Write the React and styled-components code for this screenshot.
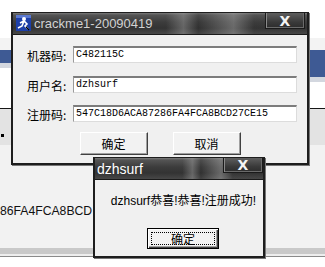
import React from "react";
import styled, { createGlobalStyle } from "styled-components";

const Global = createGlobalStyle`
  html, body {
    margin: 0;
    padding: 0;
    background: #ffffff;
  }
  body {
    width: 325px;
    height: 267px;
    overflow: hidden;
  }
`;

const CJK = `"Liberation Sans", "Noto Sans CJK SC", sans-serif`;

const Desktop = styled.div`
  position: relative;
  width: 325px;
  height: 267px;
  overflow: hidden;
  background: #ffffff;
`;

/* ---------- the desktop behind the windows ---------- */

const Backdrop = styled.div`
  display: flex;
  flex-direction: column;
  height: 100%;
`;

const TopSpace = styled.div`
  height: 50px;
  background: linear-gradient(180deg, #ffffff 0 38px, #f3f3f3 38px);
`;

const BandArea = styled.div`
  display: flex;
  align-items: flex-start;
  justify-content: space-between;
  height: 58px;
  background: #ffffff;
`;

const BlueBar = styled.div`
  width: ${(p) => p.$w}px;
  height: ${(p) => p.$h}px;
  background: #3e5a94;
  border-bottom: 5px solid #d3d7df;
`;

const Rule = styled.div`
  height: 1px;
  background: #161616;
`;

const GrayBand = styled.div`
  display: flex;
  align-items: flex-end;
  height: 36px;
  padding-bottom: 8px;
  box-sizing: border-box;
  background: #e3e3e3;
`;

const Marker = styled.span`
  width: 3px;
  height: 3px;
  margin-left: 1px;
  background: #000;
`;

const Panel = styled.div`
  display: flex;
  align-items: center;
  height: 103px;
  padding-top: 29px;
  box-sizing: border-box;
  background: #f2f2f2;
`;

const PanelText = styled.span`
  font-family: "Liberation Sans", sans-serif;
  font-size: 12.2px;
  color: #111;
  white-space: nowrap;
`;

const Shelf = styled.div`
  height: 6px;
  background: #c9c9c9;
  border-bottom: 2px solid #eeeeee;
`;

const ShelfLine = styled.div`
  height: 1px;
  background: #8a8a8a;
`;

/* ---------- windows ---------- */

const Window = styled.div`
  position: absolute;
  left: ${(p) => p.$x}px;
  top: ${(p) => p.$y}px;
  width: ${(p) => p.$w}px;
  height: ${(p) => p.$h}px;
  box-sizing: border-box;
  display: flex;
  flex-direction: column;
  background: #f0f0f0;
  border: 2px solid #1e1e1e;
  border-top-width: 1px;
  box-shadow: 1px 1px 0 #777;
`;

const TitleBar = styled.div`
  display: flex;
  align-items: flex-start;
  height: 22px;
  flex: none;
  padding-left: 2px;
  box-sizing: border-box;
  background:
    linear-gradient(90deg, rgba(0,0,0,0) 0%, rgba(0,0,0,0) 52%, rgba(160,160,160,0.45) 58%, rgba(40,40,40,0.2) 63%, rgba(170,170,170,0.45) 75%, rgba(60,60,60,0.1) 82%, rgba(0,0,0,0) 100%),
    linear-gradient(180deg, #7a7a7a 0px, #545454 2px, #3c3c3c 9px, #333333 15px, #4b4b4b 22px);
  border-bottom: 1px solid #1a1a1a;
`;

const TitleIcon = styled.svg`
  flex: none;
  margin: 2px 3px 0 1px;
`;

const TitleText = styled.span`
  flex: 1;
  margin-top: 3px;
  font-family: "Liberation Sans", sans-serif;
  font-size: ${(p) => p.$size || 13}px;
  color: ${(p) => p.$color || "#d2d2d2"};
  line-height: 16px;
  white-space: nowrap;
`;

const CloseButton = styled.div`
  flex: none;
  width: 40px;
  height: ${(p) => p.$h}px;
  margin-right: ${(p) => p.$mr}px;
  box-sizing: border-box;
  display: flex;
  align-items: center;
  justify-content: center;
  background: linear-gradient(180deg, #5e5e5e, #3a3a3a 60%, #2c2c2c);
  border: 1px solid #1a1a1a;
  border-top: none;
  box-shadow: inset 1px 0 0 #8a8a8a, inset -1px -1px 0 #6a6a6a;
  font-family: "DejaVu Sans", sans-serif;
  font-weight: bold;
  font-size: 14px;
  color: #f4f4f4;
  line-height: 1;
`;

const Client = styled.div`
  flex: 1;
  display: flex;
  flex-direction: column;
  padding: 11px 10px 0 14px;
`;

const FieldGrid = styled.div`
  display: grid;
  grid-template-columns: 46px 1fr;
  row-gap: 11.5px;
`;

const Label = styled.span`
  font-family: "Noto Sans CJK SC", sans-serif;
  font-size: 12px;
  line-height: 17px;
  color: #000;
  margin-top: 1px;
  white-space: nowrap;
`;

const Field = styled.div`
  height: 17px;
  box-sizing: border-box;
  background: #ffffff;
  border: 1px solid #dcdcdc;
  border-top: 2px solid #7c7c7c;
  border-left: 1px solid #9a9a9a;
  padding-left: 2px;
  font-family: "Liberation Mono", monospace;
  font-size: 10px;
  line-height: 14px;
  color: #000;
  white-space: nowrap;
  overflow: hidden;
`;

const ButtonRow = styled.div`
  display: flex;
  justify-content: center;
  gap: 25px;
  margin-top: 9px;
  padding-right: 4px;
`;

const PushButton = styled.div`
  flex: none;
  width: ${(p) => p.$w}px;
  height: ${(p) => p.$h}px;
  box-sizing: border-box;
  display: flex;
  align-items: center;
  justify-content: center;
  background: #f2f2f2;
  border: 1px solid ${(p) => (p.$default ? "#000" : "#fff")};
  border-right-color: ${(p) => (p.$default ? "#000" : "#404040")};
  border-bottom-color: ${(p) => (p.$default ? "#000" : "#404040")};
  box-shadow: ${(p) =>
    p.$default
      ? "inset 1px 1px 0 #fff, inset -1px -1px 0 #404040, inset -2px -2px 0 #a0a0a0"
      : "inset -1px -1px 0 #a0a0a0"};
  font-family: "Noto Sans CJK SC", sans-serif;
  font-size: 12px;
  color: #000;
`;

const FocusRing = styled.span`
  display: flex;
  align-items: center;
  justify-content: center;
  width: calc(100% - 6px);
  height: calc(100% - 6px);
  border: 1px dotted #000;
  box-sizing: border-box;
`;

const MessageBody = styled.div`
  flex: 1;
  display: flex;
  flex-direction: column;
  align-items: center;
  padding-top: 13px;
`;

const Message = styled.span`
  font-family: ${CJK};
  font-size: 12px;
  line-height: 16px;
  color: #000;
  margin-left: 9px;
  white-space: nowrap;
`;

const MessageActions = styled.div`
  display: flex;
  margin-top: 19px;
  margin-left: 8px;
`;

function AppIcon() {
  return (
    <TitleIcon width="15" height="16" viewBox="0 0 15 16">
      <rect x="0" y="0" width="15" height="16" fill="#1d3fa8" />
      <rect x="0" y="0" width="15" height="3" fill="#5a78d0" />
      <circle cx="8" cy="4" r="2" fill="#ffffff" />
      <path d="M4 8 L8 6 L11 9 L9 11 L12 14 M8 6 L6 11 L2 13" stroke="#ffffff" strokeWidth="1.6" fill="none" />
      <path d="M10 12 L13 15" stroke="#000" strokeWidth="1.2" />
    </TitleIcon>
  );
}

export default function App() {
  return (
    <>
      <Global />
      <Desktop>
        <Backdrop>
          <TopSpace />
          <BandArea>
            <BlueBar $w={11} $h={13} />
            <BlueBar $w={17} $h={27} />
          </BandArea>
          <Rule />
          <GrayBand>
            <Marker />
          </GrayBand>
          <Panel>
            <PanelText>86FA4FCA8BCD</PanelText>
          </Panel>
          <Shelf />
          <ShelfLine />
        </Backdrop>

        <Window $x={11} $y={12} $w={298} $h={153}>
          <TitleBar>
            <AppIcon />
            <TitleText>crackme1-20090419</TitleText>
            <CloseButton $h={16} $mr={2}>X</CloseButton>
          </TitleBar>
          <Client>
            <FieldGrid>
              <Label>机器码:</Label>
              <Field>C482115C</Field>
              <Label>用户名:</Label>
              <Field>dzhsurf</Field>
              <Label>注册码:</Label>
              <Field>547C18D6ACA87286FA4FCA8BCD27CE15</Field>
            </FieldGrid>
            <ButtonRow>
              <PushButton $w={68} $h={23}>确定</PushButton>
              <PushButton $w={68} $h={23}>取消</PushButton>
            </ButtonRow>
          </Client>
        </Window>

        <Window $x={93} $y={157} $w={172} $h={101}>
          <TitleBar>
            <TitleText $color="#ffffff" $size={14}>dzhsurf</TitleText>
            <CloseButton $h={15} $mr={0}>X</CloseButton>
          </TitleBar>
          <MessageBody>
            <Message>dzhsurf恭喜!恭喜!注册成功!</Message>
            <MessageActions>
              <PushButton $w={72} $h={21} $default>
                <FocusRing>确定</FocusRing>
              </PushButton>
            </MessageActions>
          </MessageBody>
        </Window>
      </Desktop>
    </>
  );
}
